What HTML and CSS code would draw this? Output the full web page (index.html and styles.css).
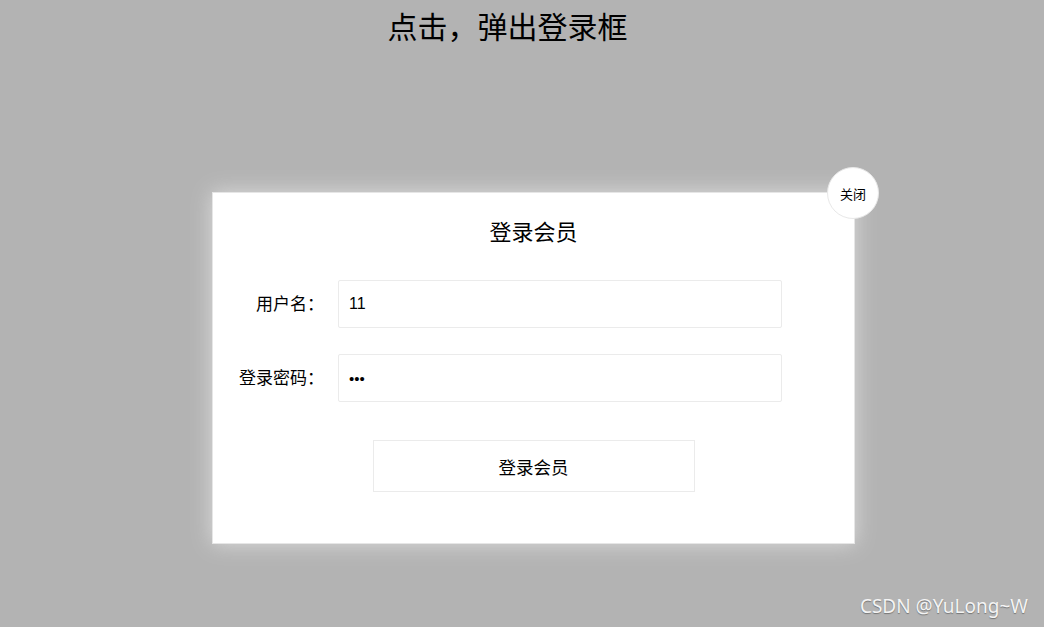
FILE: index.html
```html
<!DOCTYPE html>
<html lang="zh">
<head>
<meta charset="utf-8">
<title>登录</title>
<link rel="stylesheet" href="styles.css">
</head>
<body>
<h1 class="page-title">点击，弹出登录框</h1>
<div class="modal">
  <div class="modal-title">登录会员</div>
  <div class="form">
    <div class="row">
      <label class="label">用户名：</label>
      <div class="input">11</div>
    </div>
    <div class="row">
      <label class="label">登录密码：</label>
      <div class="input password">•••</div>
    </div>
  </div>
  <div class="btn">登录会员</div>
  <div class="close">关闭</div>
</div>
<div class="watermark">CSDN @YuLong~W</div>
</body>
</html>
```
FILE: styles.css
```css
html, body {
  margin: 0;
  padding: 0;
}
body {
  width: 1044px;
  height: 627px;
  background: #b3b3b3;
  font-family: "Liberation Sans", "Noto Sans CJK SC", sans-serif;
  color: #000;
  overflow: hidden;
  position: relative;
}
.page-title {
  margin: 0;
  padding-right: 29px;
  text-align: center;
  font-size: 30px;
  font-weight: normal;
  line-height: 50px;
  font-family: "Noto Sans CJK SC", sans-serif;
}
.modal {
  position: relative;
  margin: 142px 0 0 212px;
  width: 641px;
  height: 333px;
  background: #fff;
  border: 1px solid #e6e6e6;
  box-shadow: 0 0 20px #dcdcdc;
  display: flex;
  flex-direction: column;
  align-items: center;
  padding-top: 17px;
  box-sizing: content-box;
}
.modal-title {
  font-family: "Noto Sans CJK SC", sans-serif;
  font-size: 22px;
  line-height: 40px;
  height: 40px;
}
.form {
  margin-top: 30px;
  display: flex;
  flex-direction: column;
  gap: 26px;
  align-self: stretch;
}
.row {
  display: flex;
  align-items: center;
}
.label {
  width: 111px;
  text-align: right;
  font-family: "Noto Sans CJK SC", sans-serif;
  font-size: 17px;
  line-height: 20px;
  margin-right: 14px;
  margin-top: -3px;
}
.input {
  width: 432px;
  height: 46px;
  border: 1px solid #ebebeb;
  border-radius: 2px;
  padding-left: 10px;
  box-sizing: content-box;
  display: flex;
  align-items: center;
  font-size: 16px;
  font-family: "Liberation Sans", sans-serif;
}
.input.password {
  font-size: 15px;
}
.btn {
  margin-top: 38px;
  width: 320px;
  height: 50px;
  border: 1px solid #ebebeb;
  display: flex;
  align-items: center;
  justify-content: center;
  font-family: "Noto Sans CJK SC", sans-serif;
  font-size: 17.5px;
}
.close {
  position: absolute;
  top: -26px;
  right: -25px;
  width: 50px;
  height: 50px;
  border-radius: 50%;
  background: #fff;
  border: 1px solid #e8e8e8;
  display: flex;
  align-items: center;
  justify-content: center;
  font-family: "Noto Sans CJK SC", sans-serif;
  font-size: 13px;
}
.watermark {
  position: absolute;
  right: 16px;
  bottom: 8px;
  font-family: "Noto Sans", "Liberation Sans", sans-serif;
  font-size: 19px;
  color: #f4f4f4;
  text-shadow: 0 1px 1px rgba(0,0,0,0.35);
}
```
